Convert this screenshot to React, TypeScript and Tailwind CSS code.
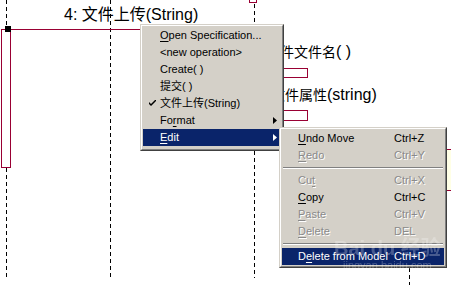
import type { ReactNode } from 'react'

const menuFont = "font-['Liberation_Sans','Noto_Sans_CJK_SC',sans-serif] text-[11px]"
const diagramFont = "font-['Liberation_Sans','Noto_Sans_CJK_SC',sans-serif]"

function Dashed({ className }: { className: string }) {
  return <div className={`absolute w-px bg-[repeating-linear-gradient(to_bottom,#000_0_4px,transparent_4px_7px)] ${className}`} />
}

function Arrow({ white }: { white?: boolean }) {
  return (
    <svg width="4" height="7" viewBox="0 0 4 7" className="shrink-0">
      <path d="M0 0 L4 3.5 L0 7 Z" fill={white ? '#fff' : '#000'} />
    </svg>
  )
}

function Check() {
  return (
    <svg width="7" height="7" viewBox="0 0 7 7">
      <path d="M0 2 L0 4 L2 6 L7 1 L7 -1 L2 4 Z" fill="#000" />
    </svg>
  )
}

function U({ children }: { children: ReactNode }) {
  return <span className="underline underline-offset-[2px]">{children}</span>
}

function Cjk({ children }: { children: ReactNode }) {
  return <span className="text-[14px]">{children}</span>
}

function MainItem({ children, check, arrow, active }: { children: ReactNode; check?: boolean; arrow?: boolean; active?: boolean }) {
  return (
    <div className={`flex h-[17px] items-center pr-[4px] ${active ? 'bg-[#0a246a] text-white' : 'text-black'}`}>
      <div className="flex w-[17px] justify-center pl-[1px]">{check && <Check />}</div>
      <div className="flex-1 whitespace-nowrap">{children}</div>
      {arrow && <Arrow white={active} />}
    </div>
  )
}

function SubItem({ label, shortcut, disabled, active }: { label: ReactNode; shortcut: string; disabled?: boolean; active?: boolean }) {
  const tone = active
    ? 'bg-[#0a246a] text-white'
    : disabled
      ? 'text-[#8a8a8a] [text-shadow:1px_1px_0_#fff]'
      : 'text-black'
  return (
    <div className={`flex h-[17px] items-center pl-[16px] whitespace-nowrap ${tone}`}>
      <div className="w-[96px]">{label}</div>
      <div>{shortcut}</div>
    </div>
  )
}

function Sep() {
  return (
    <div className="flex h-[8px] flex-col justify-center px-[1px]">
      <div className="h-px bg-[#808080]" />
      <div className="h-px bg-white" />
    </div>
  )
}

function Popup({ className, children }: { className: string; children: ReactNode }) {
  return (
    <div className={`absolute border border-t-[#d4d0c8] border-l-[#d4d0c8] border-r-[#404040] border-b-[#404040] bg-[#d4d0c8] ${className}`}>
      <div className="h-full border border-t-white border-l-white border-r-[#808080] border-b-[#808080] p-px">
        {children}
      </div>
    </div>
  )
}

export default function App() {
  return (
    <div className="relative h-[285px] w-[451px] overflow-hidden bg-white">
      {/* lifelines */}
      <Dashed className="left-[6px] top-0 h-[26px]" />
      <Dashed className="left-[6px] top-[168px] h-[110px]" />
      <Dashed className="left-[110px] top-0 h-[278px]" />
      <Dashed className="left-[254px] top-[4px] h-[274px]" />
      <Dashed className="left-[409px] top-[268px] h-[17px]" />
      <div className="absolute left-[249px] top-[-4px] h-[7px] w-[8px] border border-[#990033] bg-white" />

      {/* activation + message */}
      <div className="absolute left-[1px] top-[29px] h-[139px] w-[10px] border border-[#990033] bg-white" />
      <div className="absolute left-[1px] top-[29px] h-px w-[150px] bg-[#990033]" />
      <div className="absolute left-[5px] top-[26px] h-[6px] w-[6px] bg-black" />

      <div className={`absolute left-[64px] top-[5px] ${diagramFont} text-[16px] leading-[20px] text-black whitespace-nowrap`}>
        4: 文件上传(String)
      </div>

      <div className={`absolute left-[280px] top-[43px] ${diagramFont} text-[16px] leading-[18px] text-black whitespace-nowrap`}>
        <Cjk>件文件名</Cjk>( )
      </div>
      <div className="absolute left-[260px] top-[68px] h-[10px] w-[48px] border border-[#990033] bg-white" />
      <div className={`absolute left-[271px] top-[86px] ${diagramFont} text-[16px] leading-[18px] text-black whitespace-nowrap`}>
        <Cjk>文件属性</Cjk>(string)
      </div>
      <div className="absolute left-[260px] top-[110px] h-[11px] w-[48px] border border-[#990033] bg-white" />

      <div className="absolute left-[440px] top-[149px] h-[42px] w-[20px] border-y border-[#990033] bg-[#ffffe6]" />

      {/* context menu */}
      <Popup className={`left-[140px] top-[24px] h-[127px] w-[144px] ${menuFont}`}>
        <MainItem><U>O</U>pen Specification...</MainItem>
        <MainItem>&lt;new operation&gt;</MainItem>
        <MainItem>Create( )</MainItem>
        <MainItem>提交( )</MainItem>
        <MainItem check>文件上传(String)</MainItem>
        <MainItem arrow>Fo<U>r</U>mat</MainItem>
        <MainItem arrow active><U>E</U>dit</MainItem>
      </Popup>

      {/* Edit submenu */}
      <Popup className={`left-[279px] top-[127px] h-[141px] w-[168px] ${menuFont}`}>
        <SubItem label={<><U>U</U>ndo Move</>} shortcut="Ctrl+Z" />
        <SubItem label={<><U>R</U>edo</>} shortcut="Ctrl+Y" disabled />
        <Sep />
        <SubItem label={<>Cu<U>t</U></>} shortcut="Ctrl+X" disabled />
        <SubItem label={<><U>C</U>opy</>} shortcut="Ctrl+C" />
        <SubItem label={<><U>P</U>aste</>} shortcut="Ctrl+V" disabled />
        <SubItem label={<><U>D</U>elete</>} shortcut="DEL" disabled />
        <Sep />
        <SubItem label={<>D<U>e</U>lete from Model</>} shortcut="Ctrl+D" active />
      </Popup>

      {/* faint watermark */}
      <div className={`pointer-events-none absolute left-[334px] top-[236px] flex flex-col items-center ${diagramFont} text-white opacity-25`}>
        <div className="text-[20px] font-bold leading-[24px]">Bai du 经验</div>
        <div className="text-[11px] leading-[11px]">jingyan.baidu.com</div>
      </div>
    </div>
  )
}
